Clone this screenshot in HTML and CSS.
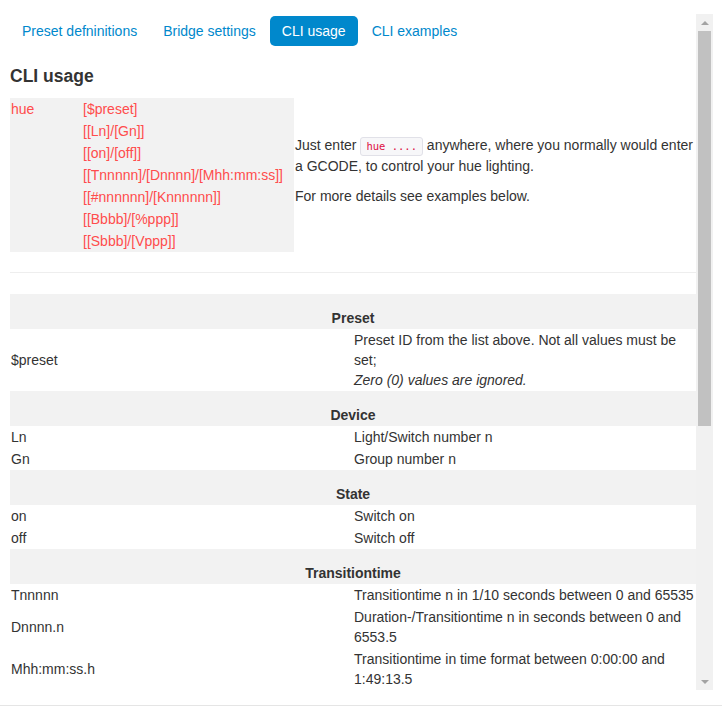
FILE: index.html
```html
<!DOCTYPE html>
<html>
<head>
<meta charset="utf-8">
<link rel="stylesheet" href="styles.css">
</head>
<body>
<div class="modal-body">
  <div class="viewport">
    <div class="content">
      <ul class="pills">
        <li><a>Preset defninitions</a></li>
        <li><a>Bridge settings</a></li>
        <li class="active"><a>CLI usage</a></li>
        <li><a>CLI examples</a></li>
      </ul>
      <h4 class="title">CLI usage</h4>
      <table class="usage">
        <tr>
          <td class="usage-left">
            <table class="syntax">
              <tr><td class="cmd">hue</td><td>[$preset]</td></tr>
              <tr><td></td><td>[[Ln]/[Gn]]</td></tr>
              <tr><td></td><td>[[on]/[off]]</td></tr>
              <tr><td></td><td>[[Tnnnnn]/[Dnnnn]/[Mhh:mm:ss]]</td></tr>
              <tr><td></td><td>[[#nnnnnn]/[Knnnnnn]]</td></tr>
              <tr><td></td><td>[[Bbbb]/[%ppp]]</td></tr>
              <tr><td></td><td>[[Sbbb]/[Vppp]]</td></tr>
            </table>
          </td>
          <td class="usage-right">
            <p>Just enter <code>hue ....</code> anywhere, where you normally would enter a GCODE, to control your hue lighting.</p>
            <p>For more details see examples below.</p>
          </td>
        </tr>
      </table>
      <hr class="sep">
      <table class="params">
        <tr class="head"><th colspan="2">Preset</th></tr>
        <tr><td>$preset</td><td>Preset ID from the list above. Not all values must be set;<br><em>Zero (0) values are ignored.</em></td></tr>
        <tr class="head"><th colspan="2">Device</th></tr>
        <tr><td>Ln</td><td>Light/Switch number n</td></tr>
        <tr><td>Gn</td><td>Group number n</td></tr>
        <tr class="head"><th colspan="2">State</th></tr>
        <tr><td>on</td><td>Switch on</td></tr>
        <tr><td>off</td><td>Switch off</td></tr>
        <tr class="head"><th colspan="2">Transitiontime</th></tr>
        <tr><td>Tnnnnn</td><td>Transitiontime n in 1/10 seconds between 0 and 65535</td></tr>
        <tr><td>Dnnnn.n</td><td>Duration-/Transitiontime n in seconds between 0 and 6553.5</td></tr>
        <tr><td>Mhh:mm:ss.h</td><td>Transitiontime in time format between 0:00:00 and 1:49:13.5</td></tr>
      </table>
    </div>
    <div class="scrollbar">
      <div class="sb-btn"><span class="arrow-up"></span></div>
      <div class="sb-track">
        <div class="sb-thumb"></div>
      </div>
      <div class="sb-btn"><span class="arrow-down"></span></div>
    </div>
  </div>
</div>
<div class="modal-footer"></div>
</body>
</html>
```
FILE: styles.css
```css
html, body {
  margin: 0;
  padding: 0;
  background: #fff;
}
body {
  font-family: "Liberation Sans", Arial, sans-serif;
  font-size: 14px;
  line-height: 20px;
  color: #333;
  width: 722px;
  height: 707px;
  overflow: hidden;
}
.modal-body {
  padding-top: 14px;
  height: 676px;
  padding-bottom: 15px;
}
.viewport {
  display: flex;
  width: 713px;
  height: 676px;
}
.content {
  flex: 1;
  overflow: hidden;
  padding-left: 10px;
}
.pills {
  list-style: none;
  margin: 2px 0 0 0;
  padding: 0;
  display: flex;
  gap: 2px;
}
.pills a {
  display: block;
  padding: 5px 12px;
  line-height: 20px;
  border-radius: 5px;
  color: #0088cc;
}
.pills .active a {
  background: #0088cc;
  color: #fff;
}
.title {
  margin: 20px 0 12px 0;
  font-size: 17.5px;
  line-height: 20px;
  font-weight: bold;
  color: #333;
}
.usage {
  border-collapse: collapse;
  width: 686px;
}
.usage td {
  padding: 0;
}
.usage-left {
  width: 284px;
  vertical-align: top;
}
.usage-right {
  vertical-align: middle;
  padding-left: 1px !important;
}
.usage-right p {
  margin: 0 0 10px 0;
}
.syntax {
  border-collapse: collapse;
  background: #f2f2f2;
  width: 284px;
  color: #ff4c4c;
}
.syntax td {
  padding: 1px;
  line-height: 20px;
}
.syntax .cmd {
  width: 70px;
}
code {
  display: inline-block;
  font-family: "DejaVu Sans Mono", "Liberation Mono", monospace;
  font-size: 10.5px;
  line-height: 15px;
  color: #dd1144;
  background: #f7f7f9;
  border: 1px solid #e1e1e8;
  border-radius: 3px;
  padding: 1px 5px;
  vertical-align: 0;
}
.sep {
  margin: 20px 0 21px 0;
  border: 0;
  border-top: 1px solid #eee;
  width: 686px;
}
.params {
  border-collapse: collapse;
  width: 686px;
  table-layout: fixed;
}
.params td {
  padding: 1px;
  line-height: 20px;
  vertical-align: middle;
  width: 50%;
}
.params .head th {
  background: #f2f2f2;
  padding: 14px 1px 1px 1px;
  line-height: 20px;
  font-weight: bold;
  text-align: center;
}
.scrollbar {
  width: 17px;
  background: #f1f1f1;
  display: flex;
  flex-direction: column;
}
.sb-btn {
  height: 17px;
  display: flex;
  align-items: center;
  justify-content: center;
}
.arrow-up {
  width: 0;
  height: 0;
  border-left: 4px solid transparent;
  border-right: 4px solid transparent;
  border-bottom: 4px solid #a3a3a3;
}
.arrow-down {
  width: 0;
  height: 0;
  border-left: 4px solid transparent;
  border-right: 4px solid transparent;
  border-top: 4px solid #a3a3a3;
}
.sb-track {
  flex: 1;
  padding: 0 2px;
}
.sb-thumb {
  height: 395px;
  background: #c1c1c1;
}
.modal-footer {
  border-top: 1px solid #e5e5e5;
}
```
